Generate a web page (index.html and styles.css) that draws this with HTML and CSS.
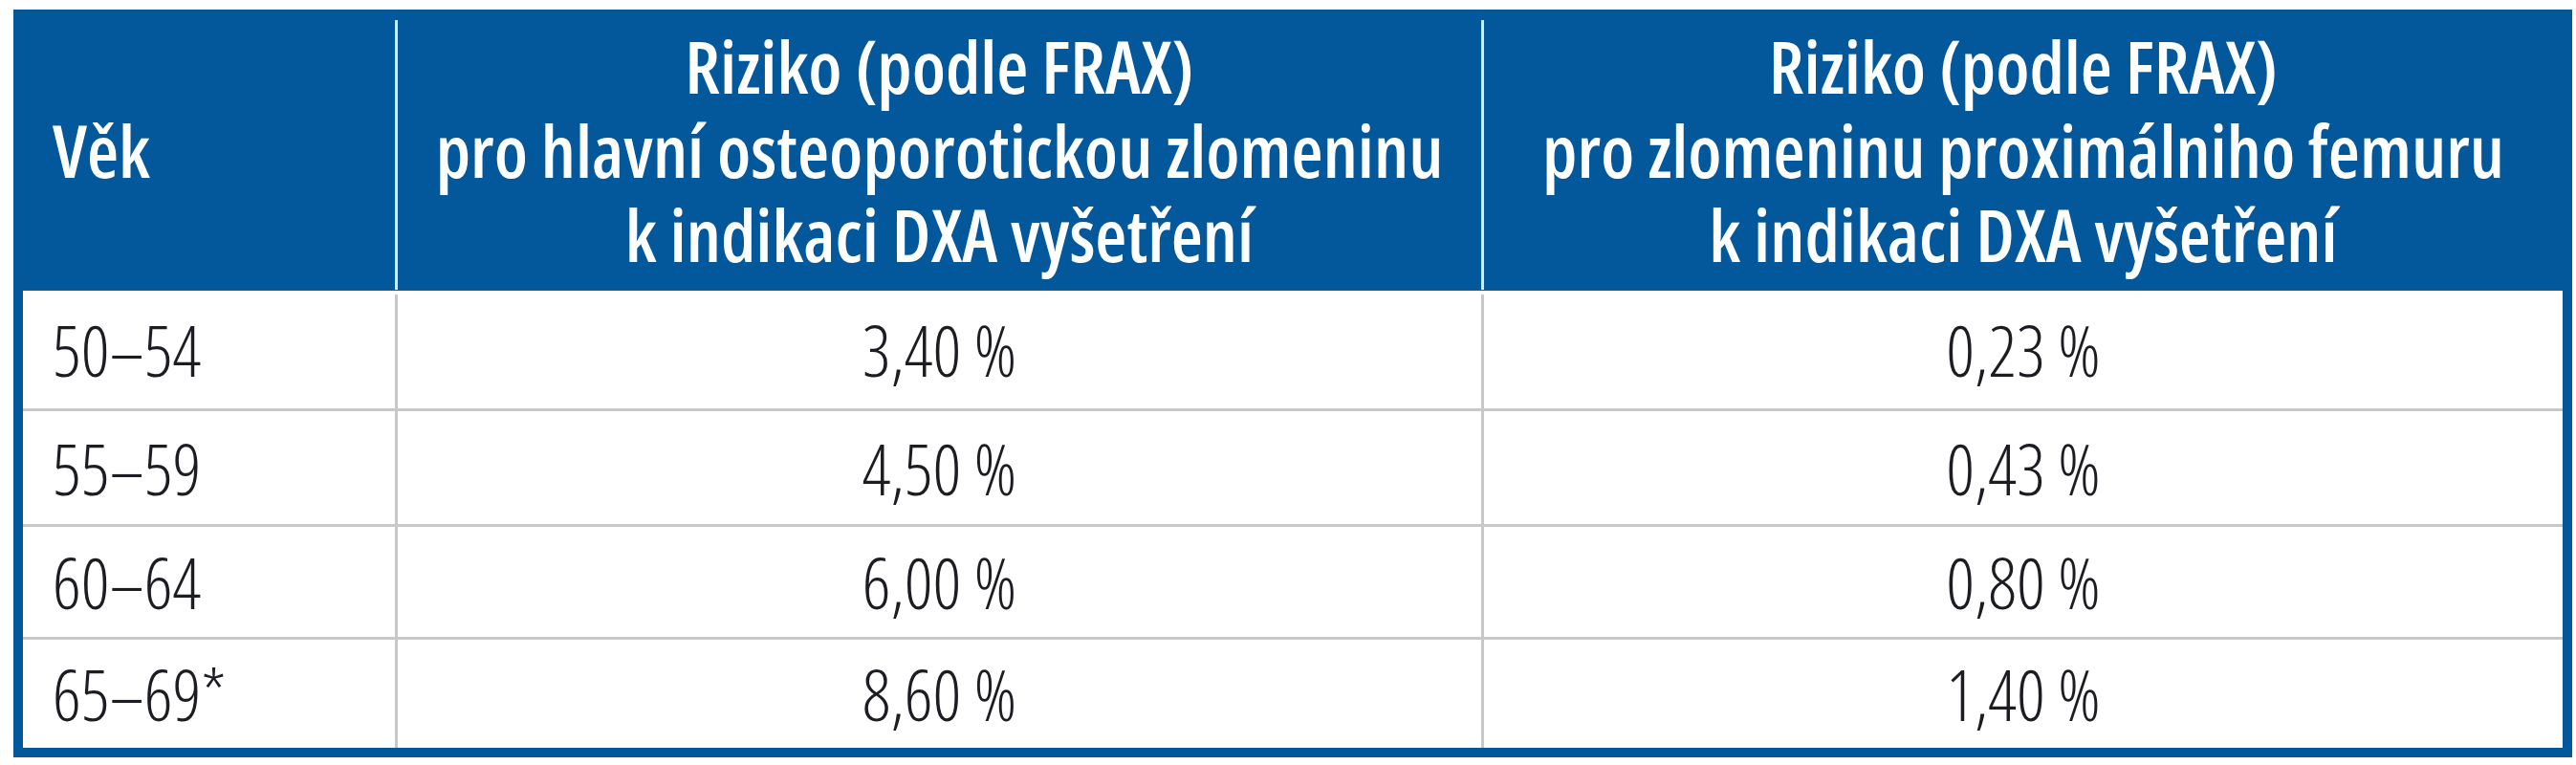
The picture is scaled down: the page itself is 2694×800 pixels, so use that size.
FILE: index.html
```html
<!DOCTYPE html>
<html lang="cs">
<head>
<meta charset="utf-8">
<title>Riziko podle FRAX</title>
<link rel="stylesheet" href="styles.css">
</head>
<body>
<div class="wrap">
  <table class="frax">
    <colgroup>
      <col class="c-age">
      <col class="c-major">
      <col class="c-hip">
    </colgroup>
    <thead>
      <tr>
        <th class="age">Věk</th>
        <th class="val">Riziko (podle FRAX)<br>pro hlavní osteoporotickou zlomeninu<br>k indikaci DXA vyšetření</th>
        <th class="val">Riziko (podle FRAX)<br>pro zlomeninu proximálniho femuru<br>k indikaci DXA vyšetření</th>
      </tr>
    </thead>
    <tbody>
      <tr class="r1">
        <td class="age">50–54</td>
        <td class="val">3,40 %</td>
        <td class="val">0,23 %</td>
      </tr>
      <tr class="r2">
        <td class="age">55–59</td>
        <td class="val">4,50 %</td>
        <td class="val">0,43 %</td>
      </tr>
      <tr class="r3">
        <td class="age">60–64</td>
        <td class="val">6,00 %</td>
        <td class="val">0,80 %</td>
      </tr>
      <tr class="r4">
        <td class="age">65–69*</td>
        <td class="val">8,60 %</td>
        <td class="val">1,40 %</td>
      </tr>
    </tbody>
  </table>
</div>
</body>
</html>
```
FILE: styles.css
```css
html, body {
  margin: 0;
  padding: 0;
  background: #ffffff;
}

.wrap {
  padding: 10px 4px 8px 14px;
}

.frax {
  width: 2676px;
  border-collapse: separate;
  border-spacing: 0;
  table-layout: fixed;
  border: 10px solid #03589b;
  border-top: 0;
  font-family: "Open Sans", "DejaVu Sans Condensed", sans-serif;
  font-stretch: 75%;
  white-space: nowrap;
}

.c-age { width: 389px; }
.c-major { width: 1136px; }
.c-hip { width: 1131px; }

.frax thead th {
  height: 294px;
  padding: 0;
  background: #03589b;
  color: #ffffff;
  font-weight: 600;
  font-size: 76px;
  line-height: 88px;
  vertical-align: middle;
  box-shadow: inset 0 -1px 0 #2b5b82;
}

.frax thead th.age {
  text-align: left;
  padding-left: 31px;
}

.frax thead th.val {
  text-align: center;
  background:
    linear-gradient(#c9f1ff, #c9f1ff) no-repeat left 0 top 11px / 3px calc(100% - 11px),
    #03589b;
  padding-left: 3px;
}

.frax tbody td {
  padding: 0;
  color: #1c1c22;
  font-size: 73px;
  font-weight: 350;
  vertical-align: middle;
  background: #ffffff;
}

.frax tbody td.age {
  text-align: left;
  padding-left: 31px;
}

.frax tbody td.val {
  text-align: center;
  padding-left: 3px;
  background:
    linear-gradient(#c8c8c8, #c8c8c8) no-repeat left 0 top 0 / 3px 100%,
    #ffffff;
}

.frax tbody tr.r1 td.val {
  background:
    linear-gradient(#c8c8c8, #c8c8c8) no-repeat left 0 top 4px / 3px 100%,
    #ffffff;
}

.frax tbody tr.r1 td,
.frax tbody tr.r2 td,
.frax tbody tr.r3 td {
  border-bottom: 3px solid #c8c8c8;
}

.frax tbody tr.r1 td { height: 123px; }
.frax tbody tr.r2 td { height: 118px; }
.frax tbody tr.r3 td { height: 115px; }
.frax tbody tr.r4 td { height: 113px; }
```
